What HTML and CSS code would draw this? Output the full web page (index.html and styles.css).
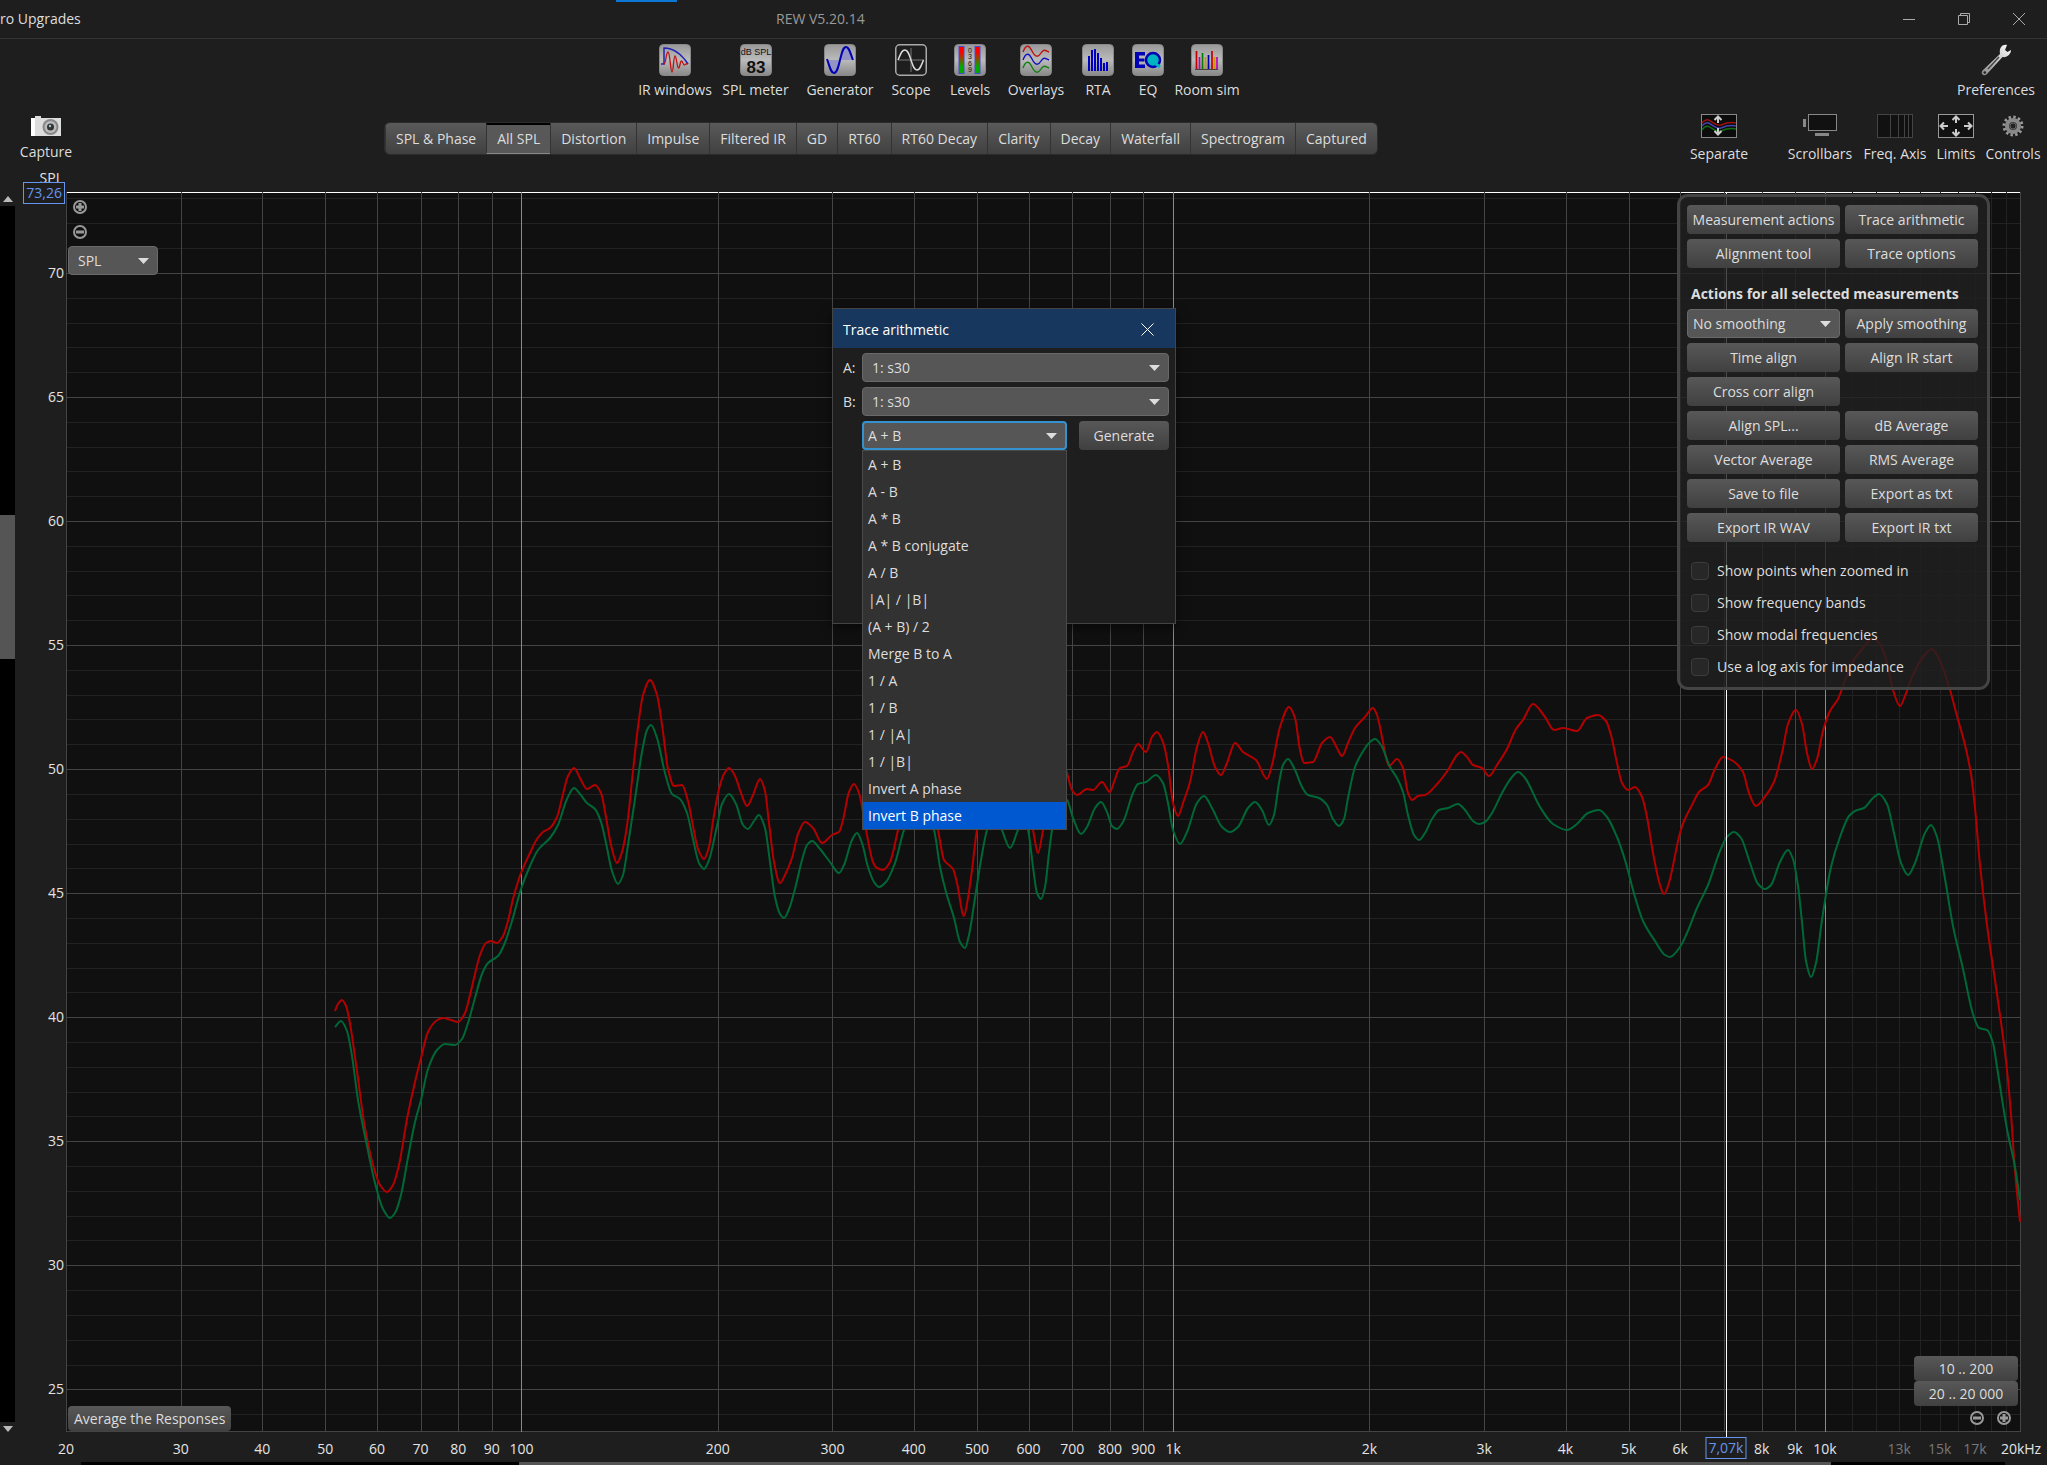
FILE: index.html
```html
<!DOCTYPE html>
<html lang="en">
<head>
    <meta charset="UTF-8">
    <meta name="viewport" content="width=device-width, initial-scale=1.0">
    <title>REW V5.20.14</title>
    <link rel="stylesheet" href="styles.css">
</head>
<body>
<header class="titlebar">
    <span class="menu-item">ro Upgrades</span>
    <span class="drag-mark"></span>
    <h1>REW V5.20.14</h1>
    <div class="window-buttons">
        <button aria-label="Minimize"><svg width="12" height="12" viewBox="0 0 12 12"><path d="M0 6.500H12"/></svg></button>
        <button aria-label="Restore"><svg width="12" height="12" viewBox="0 0 12 12"><path d="M.5 2.500H9.500V11.500H.5ZM2.500 2.500V.5H11.500V9.500H9.500"/></svg></button>
        <button aria-label="Close"><svg width="12" height="12" viewBox="0 0 12 12"><path d="M0 0L12 12M12 0L0 12"/></svg></button>
    </div>
</header>

<nav class="toolbar">
    <div class="tools">
        <button class="tool">
            <svg width="32" height="32" viewBox="0 0 32 32"><use href="#tile"/><path d="M2 20H5V4C15 4 23 11 29 20" fill="none" stroke="#2222b8" stroke-width="1.500"/><path d="M5 20C7 20 7 8 9 8S11.500 28 13 28 14.500 12 16 12 18 24 19.500 24 21 17 22.500 17 24 21.500 25.500 21 27 19 29 20" fill="none" stroke="#c01010" stroke-width="1.300"/></svg>
            <span>IR windows</span>
        </button>
        <button class="tool">
            <svg width="32" height="32" viewBox="0 0 32 32"><use href="#tile"/><text x="16" y="11" class="tile-small">dB SPL</text><text x="16" y="29" class="tile-big">83</text></svg>
            <span>SPL meter</span>
        </button>
        <button class="tool">
            <svg width="32" height="32" viewBox="0 0 32 32"><use href="#tile"/><path d="M3 16C6 24 7 29 10 29S14 24 16 16ZM16 16C18 8 19 3 22 3S26 8 29 16Z" fill="#9494c4"/><path d="M3 15C6 24 7 29 10 29S14 24 16 16 19 3 22 3 26 8 29 16" fill="none" stroke="#0000b4" stroke-width="2"/></svg>
            <span>Generator</span>
        </button>
        <button class="tool">
            <svg width="32" height="32" viewBox="0 0 32 32"><rect x=".75" y=".75" width="30.500" height="30.500" rx="4" fill="#1e1e1e" stroke="#aaa" stroke-width="1.500"/><path d="M3 16H29M16 4V28" stroke="#777"/><path d="M3 16C6 9 7 6 10 6S14 10 16 16 19 26 22 26 26 22 28.500 16" fill="none" stroke="#ddd" stroke-width="1.500"/></svg>
            <span>Scope</span>
        </button>
        <button class="tool">
            <svg width="32" height="32" viewBox="0 0 32 32"><use href="#tile"/><rect x="5" y="2.500" width="5" height="27" fill="url(#level)" stroke="#4a4ad0"/><rect x="21" y="2.500" width="5" height="27" fill="url(#level)" stroke="#4a4ad0"/><text x="16" y="9" class="tile-tick">0</text><text x="16" y="15" class="tile-tick">3</text><text x="16" y="22" class="tile-tick">6</text><text x="16" y="28" class="tile-tick">9</text></svg>
            <span>Levels</span>
        </button>
        <button class="tool">
            <svg width="32" height="32" viewBox="0 0 32 32"><use href="#tile"/><g fill="none" stroke-width="1.400"><path d="M3 8C6 0 9 1 12 7S18 14 21 9 26 7 29 8" stroke="#c01010"/><path d="M3 16C6 8 9 9 12 15S18 22 21 17 26 15 29 16" stroke="#1010c0"/><path d="M3 24C6 16 9 17 12 23S18 30 21 25 26 23 29 24" stroke="#108010"/></g></svg>
            <span>Overlays</span>
        </button>
        <button class="tool">
            <svg width="32" height="32" viewBox="0 0 32 32"><use href="#tile"/><path d="M7 27V12M10 27V6M13 27V5M16 27V9M19 27V14M22 27V19M25 27V18" stroke="#0000c0" stroke-width="2"/></svg>
            <span>RTA</span>
        </button>
        <button class="tool">
            <svg width="32" height="32" viewBox="0 0 32 32"><use href="#tile"/><path d="M3 8H13V11.500H7V14.500H12.500V17.500H7V20.500H13V24H3Z" fill="#0000b4"/><circle cx="21" cy="16" r="7" fill="#00b4c0" stroke="#0000b4" stroke-width="2.500"/><path d="M24 20L28 23" stroke="#00b4c0" stroke-width="3"/></svg>
            <span>EQ</span>
        </button>
        <button class="tool">
            <svg width="32" height="32" viewBox="0 0 32 32"><use href="#tile"/><g stroke-width="1.700"><path d="M5.500 25V7M21 25V7" stroke="#c00000"/><path d="M8.500 25V13M26 25V13" stroke="#c000c0"/><path d="M11.500 25V9" stroke="#008000"/><path d="M14.500 25V13M23.500 25V13" stroke="#c89600"/><path d="M17.500 25V11" stroke="#0000b0"/></g><path d="M4 25.500H27" stroke="#444"/></svg>
            <span>Room sim</span>
        </button>
    </div>
    <button class="tool preferences">
        <svg width="32" height="32" viewBox="0 0 32 32"><path d="M27 1C22 0 19 4 20 10L2.500 26.500C0 30 4 33 7 30L22.500 13C27 14 31 10 31 6L27.500 8 25 6Z" fill="url(#steel)"/><path d="M8 25L19 13" stroke="#444" stroke-width="1.500"/><circle cx="4.800" cy="28.500" r="1.300" fill="#222"/></svg>
        <span>Preferences</span>
    </button>
</nav>

<div class="graph-bar">
    <button class="tool capture">
        <svg width="32" height="24" viewBox="0 0 32 24"><path d="M1 4H5V2H11V4H31V22H1Z" fill="#ddd"/><path d="M1 4H5V22H1Z" fill="#fff"/><circle cx="20.500" cy="13" r="8" fill="#888"/><circle cx="20.500" cy="13" r="6" fill="#bbb"/><circle cx="20.500" cy="13" r="3.500" fill="#333"/><circle cx="20" cy="12" r="1.200" fill="#9cc"/></svg>
        <span>Capture</span>
    </button>
    <div class="tabs">
        <button>SPL &amp; Phase</button>
        <button class="active">All SPL</button>
        <button>Distortion</button>
        <button>Impulse</button>
        <button>Filtered IR</button>
        <button>GD</button>
        <button>RT60</button>
        <button>RT60 Decay</button>
        <button>Clarity</button>
        <button>Decay</button>
        <button>Waterfall</button>
        <button>Spectrogram</button>
        <button>Captured</button>
    </div>
    <div class="view-tools">
        <button class="tool">
            <svg width="36" height="24" viewBox="0 0 36 24"><rect x=".5" y=".5" width="35" height="23" fill="#0c0c0c" stroke="#888"/><g fill="none" stroke-width="1.500"><path d="M1 9C8 0 12 13 20 11 27 8 30 8 35 9" stroke="#a01010"/><path d="M1 12C8 3 12 16 20 14 27 11 30 11 35 12" stroke="#4444b0"/><path d="M1 16C8 6 12 20 20 17 27 14 30 14 35 15" stroke="#107010"/></g><path d="M17 2V9M13.500 6L17 2.500L20.500 6M17 14V21M13.500 17L17 20.500L20.500 17" fill="none" stroke="#ccc" stroke-width="2"/></svg>
            <span>Separate</span>
        </button>
        <button class="tool">
            <svg width="36" height="24" viewBox="0 0 36 24"><rect x="6.500" y=".5" width="28" height="16" fill="#111" stroke="#888"/><path d="M1 5H4V13H1ZM13 19H27V22H13Z" fill="#888"/></svg>
            <span>Scrollbars</span>
        </button>
        <button class="tool">
            <svg width="36" height="24" viewBox="0 0 36 24"><rect x=".5" y=".5" width="35" height="23" fill="#111" stroke="#444"/><path d="M13.500 0V24M21.500 0V24M27.500 0V24M31.500 0V24" stroke="#444"/></svg>
            <span>Freq. Axis</span>
        </button>
        <button class="tool">
            <svg width="36" height="24" viewBox="0 0 36 24"><rect x=".5" y=".5" width="35" height="23" fill="#111" stroke="#999"/><path d="M18 2V9M14.500 6L18 2.500L21.500 6M18 15V22M14.500 18L18 21.500L21.500 18M3 12H10M6 8.500L2.500 12L6 15.500M26 12H33M30 8.500L33.500 12L30 15.500" fill="none" stroke="#ccc" stroke-width="2"/></svg>
            <span>Limits</span>
        </button>
        <button class="tool">
            <svg width="24" height="24" viewBox="0 0 24 24"><circle cx="12" cy="12" r="9" fill="none" stroke="#999" stroke-width="3" stroke-dasharray="2.400 2.312"/><circle cx="12" cy="12" r="6" fill="#333" stroke="#888" stroke-width="4"/><circle cx="12" cy="12" r="3" fill="#222" stroke="#666"/></svg>
            <span>Controls</span>
        </button>
    </div>
</div>

<main class="graph">
    <div class="v-scroll">
        <span class="arrow up"></span>
        <div class="track"><div class="thumb"></div></div>
        <span class="arrow down"></span>
    </div>
    <div class="y-axis" id="y-axis">
        <span class="axis-name">SPL</span>
        <span class="cursor-value">73,26</span>
    </div>

    <section class="plot">
        <svg class="chart" viewBox="0 0 1955 1240" preserveAspectRatio="none">
            <g id="grid" shape-rendering="crispEdges"></g>
            <g transform="translate(-66 -192)">
                <path id="trace-red" class="trace red"/>
                <path id="trace-green" class="trace green"/>
            </g>
        </svg>
        <div class="cursor-line" id="cursor-line"></div>

        <div class="plot-left">
            <button class="zoom" aria-label="Zoom in"><svg width="16" height="16"><use href="#plus"/></svg></button>
            <button class="zoom" aria-label="Zoom out"><svg width="16" height="16"><use href="#minus"/></svg></button>
            <select aria-label="Graph axis">
                <option>SPL</option>
            </select>
            <button class="btn average">Average the Responses</button>
        </div>

        <div class="plot-right">
            <button class="btn">10 .. 200</button>
            <button class="btn">20 .. 20 000</button>
            <div class="zoom-row">
                <button class="zoom" aria-label="Zoom out"><svg width="16" height="16"><use href="#minus"/></svg></button>
                <button class="zoom" aria-label="Zoom in"><svg width="16" height="16"><use href="#plus"/></svg></button>
            </div>
        </div>

        <aside class="controls">
            <div class="button-grid">
                <button class="btn">Measurement actions</button>
                <button class="btn">Trace arithmetic</button>
                <button class="btn">Alignment tool</button>
                <button class="btn">Trace options</button>
            </div>
            <h2>Actions for all selected measurements</h2>
            <div class="button-grid">
                <select aria-label="Smoothing">
                    <option>No smoothing</option>
                </select>
                <button class="btn">Apply smoothing</button>
                <button class="btn">Time align</button>
                <button class="btn">Align IR start</button>
                <button class="btn">Cross corr align</button>
                <span></span>
                <button class="btn">Align SPL...</button>
                <button class="btn">dB Average</button>
                <button class="btn">Vector Average</button>
                <button class="btn">RMS Average</button>
                <button class="btn">Save to file</button>
                <button class="btn">Export as txt</button>
                <button class="btn">Export IR WAV</button>
                <button class="btn">Export IR txt</button>
            </div>
            <div class="checks">
                <label><input type="checkbox"> Show points when zoomed in</label>
                <label><input type="checkbox"> Show frequency bands</label>
                <label><input type="checkbox"> Show modal frequencies</label>
                <label><input type="checkbox"> Use a log axis for impedance</label>
            </div>
        </aside>

        <div class="dialog" role="dialog" aria-labelledby="dialog-title">
            <div class="dialog-title">
                <h2 id="dialog-title">Trace arithmetic</h2>
                <button aria-label="Close dialog"><svg width="13" height="13" viewBox="0 0 13 13"><path d="M.5 .5L12.500 12.500M12.500 .5L.5 12.500"/></svg></button>
            </div>
            <div class="dialog-body">
                <label for="trace-a">A:</label>
                <select id="trace-a" class="wide">
                    <option>1: s30</option>
                </select>
                <label for="trace-b">B:</label>
                <select id="trace-b" class="wide">
                    <option>1: s30</option>
                </select>
                <div class="operation">
                    <select id="operation" class="focused" aria-label="Operation">
                        <option>A + B</option>
                    </select>
                    <ul class="popup" role="listbox" aria-label="Operations">
                        <li role="option">A + B</li>
                        <li role="option">A - B</li>
                        <li role="option">A * B</li>
                        <li role="option">A * B conjugate</li>
                        <li role="option">A / B</li>
                        <li role="option">|A| / |B|</li>
                        <li role="option">(A + B) / 2</li>
                        <li role="option">Merge B to A</li>
                        <li role="option">1 / A</li>
                        <li role="option">1 / B</li>
                        <li role="option">1 / |A|</li>
                        <li role="option">1 / |B|</li>
                        <li role="option">Invert A phase</li>
                        <li role="option" class="selected" aria-selected="true">Invert B phase</li>
                    </ul>
                </div>
                <button class="btn">Generate</button>
            </div>
        </div>
    </section>

    <div class="x-axis" id="x-axis"></div>
    <div class="h-scroll">
        <div class="h-thumb"></div>
    </div>
</main>

<!-- shared icon parts -->
<svg class="defs" width="0" height="0" aria-hidden="true">
    <defs>
        <linearGradient id="tile-fill" x1="0" y1="0" x2="0" y2="1"><stop offset="0" stop-color="#999"/><stop offset=".5" stop-color="#bbb"/><stop offset="1" stop-color="#888"/></linearGradient>
        <linearGradient id="level" x1="0" y1="0" x2="0" y2="1"><stop offset=".2" stop-color="#f00"/><stop offset=".75" stop-color="#0a0"/></linearGradient>
        <linearGradient id="steel" x1="1" y1="0" x2="0" y2="1"><stop offset="0" stop-color="#fff"/><stop offset="1" stop-color="#888"/></linearGradient>
        <rect id="tile" x=".5" y=".5" width="31" height="31" rx="4" fill="url(#tile-fill)" stroke="#888"/>
        <g id="minus"><circle cx="8" cy="8" r="6" fill="none" stroke="#999" stroke-width="2"/><path d="M4 8H12" stroke="#999" stroke-width="3"/></g>
        <g id="plus"><use href="#minus"/><path d="M8 4V12" stroke="#999" stroke-width="3"/></g>
    </defs>
</svg>

<script src="script.js"></script>
</body>
</html>
```
FILE: styles.css
```css
* {
    box-sizing: border-box;
}

body {
    margin: 0;
    min-height: 100vh;
    display: flex;
    flex-direction: column;
    background: #1e1e1e;
    color: #ddd;
    font-family: "Open Sans", "Noto Sans", sans-serif;
    font-size: 14px;
    line-height: 20px;
    overflow: hidden;
}

button, select, input {
    font: inherit;
    color: inherit;
    margin: 0;
}

button {
    padding: 0;
    border: none;
    background: none;
    white-space: nowrap;
}

h1, h2 {
    margin: 0;
    font-size: 14px;
}

/* title bar */
.titlebar {
    height: 39px;
    display: grid;
    grid-template-columns: 616px 61px 1fr auto;
    align-items: center;
    border-bottom: 1px solid #333;
}

.drag-mark {
    height: 2px;
    align-self: start;
    background: #0a78d4;
}

.titlebar h1 {
    padding-left: 99px;
    font-weight: normal;
    color: #999;
}

.window-buttons {
    display: flex;
    gap: 43px;
    padding-right: 22px;
}

.window-buttons svg, .dialog-title svg {
    display: block;
    fill: none;
    stroke: #aaa;
}

/* icon toolbars */
.toolbar {
    height: 66px;
    display: flex;
    justify-content: space-between;
    align-items: flex-start;
    padding: 5px 12px 0 633px;
}

.tools {
    display: grid;
    grid-template-columns: 84px 77px 92px 50px 68px 64px 60px 40px 78px;
}

.tool {
    display: flex;
    flex-direction: column;
    align-items: center;
    gap: 4px;
}

.tile-small, .tile-big, .tile-tick {
    font-family: "Liberation Sans", sans-serif;
    text-anchor: middle;
    fill: #111;
}

.tile-small {
    font-size: 9px;
}

.tile-big {
    font-size: 17px;
    font-weight: bold;
}

.tile-tick {
    font-size: 7px;
}

.graph-bar {
    height: 87px;
    display: grid;
    grid-template-columns: 384px 994px 1fr;
    align-items: start;
    padding-top: 9px;
}

.capture {
    width: 92px;
}

.tabs {
    display: flex;
    height: 33px;
    margin-top: 8px;
    border: 1px solid #2c2c2c;
    border-radius: 6px;
    overflow: hidden;
    background: linear-gradient(#5a5a5a, #404040);
}

.tabs button {
    flex: 1 1 auto;
    border-left: 1px solid #333;
}

.tabs button.active {
    background: #585858;
    border-top: 2px solid #000;
    border-bottom: 1px solid #888;
}

.view-tools {
    display: grid;
    grid-template-columns: 124px 78px 72px 50px 64px;
    justify-content: end;
    padding-right: 2px;
}

.view-tools .tool {
    gap: 6px;
}

/* graph area: scrollbar, y axis, plot, right margin */
.graph {
    flex: 1;
    display: grid;
    grid-template-columns: 15px 51px 1fr 26px;
    grid-template-rows: 1fr 30px 3px;
}

.v-scroll {
    display: flex;
    flex-direction: column;
    align-items: center;
    gap: 4px;
    padding-top: 4px;
}

.track {
    flex: 1;
    width: 100%;
    background: #000;
    display: grid;
    grid-template-rows: 308fr 143fr 760fr;
}

.thumb {
    grid-row: 2;
    background: #555;
}

.arrow {
    border: 5px solid transparent;
}

.arrow.up {
    border-top: none;
    border-bottom: 6px solid #bbb;
}

.arrow.down {
    border-bottom: none;
    border-top: 6px solid #bbb;
}

.y-axis, .x-axis {
    position: relative;
    color: #e4e4e4;
}

.y-axis .tick {
    position: absolute;
    right: 2px;
    transform: translateY(-50%);
}

.x-axis .tick {
    position: absolute;
    top: 7px;
    transform: translateX(-50%);
}

.x-axis .dim {
    color: #777;
}

.axis-name {
    position: absolute;
    right: 3px;
    top: -24px;
}

.cursor-value {
    position: absolute;
    right: 1px;
    top: -10px;
    padding: 0 2px;
    border: 1px solid #6495ed;
    background: #1e1e1e;
    color: #6495ed;
}

.x-axis .cursor-value {
    right: auto;
    top: 5px;
    transform: translateX(-50%);
}

.x-axis {
    grid-column: 3;
    grid-row: 2;
}

.h-scroll {
    grid-column: 1 / -1;
    grid-row: 3;
    display: grid;
    grid-template-columns: 438fr 1312fr 174fr;
    margin: 0 42px 0 81px;
    background: #000;
}

.h-thumb {
    grid-column: 2;
    background: #555;
}

.plot {
    position: relative;
    background: #101010;
    border-top: 1px solid #fff;
}

.chart {
    position: absolute;
    top: -1px;
    left: 0;
    width: 100%;
    height: calc(100% + 1px);
}

.chart line {
    vector-effect: non-scaling-stroke;
}

.line-minor {
    stroke: #222;
}

.line-major {
    stroke: #444;
}

.line-decade {
    stroke: #8a8a8a;
}

.trace {
    fill: none;
    stroke-width: 2;
    vector-effect: non-scaling-stroke;
}

.trace.red {
    stroke: #b40000;
}

.trace.green {
    stroke: #006837;
}

.cursor-line {
    position: absolute;
    top: 0;
    bottom: -5px;
    width: 1px;
    background: #fff;
}

/* widgets */
.btn {
    height: 29px;
    border-radius: 4px;
    background: linear-gradient(#585858, #404040);
}

select {
    appearance: none;
    height: 29px;
    padding: 0 24px 0 5px;
    border: 1px solid #696969;
    border-radius: 4px;
    background: #565656 url("data:image/svg+xml,%3Csvg xmlns='http://www.w3.org/2000/svg' width='11' height='6'%3E%3Cpath d='M0 0H11L5.500 6Z' fill='%23ddd'/%3E%3C/svg%3E") no-repeat right 8px center;
}

select.wide {
    padding-left: 9px;
}

select.focused {
    border: 2px solid #3592d0;
    padding-left: 4px;
}

.zoom {
    height: 16px;
}

.zoom svg {
    display: block;
}

.plot-left {
    position: absolute;
    top: 6px;
    bottom: 1px;
    left: 2px;
    display: flex;
    flex-direction: column;
    align-items: flex-start;
}

.plot-left .zoom {
    margin: 0 0 9px 4px;
}

.plot-left select {
    width: 90px;
    padding-left: 9px;
    margin-top: -3px;
}

.average {
    height: 25px;
    margin-top: auto;
    padding: 0 6px;
}

.plot-right {
    position: absolute;
    right: 3px;
    bottom: 6px;
    width: 104px;
    display: flex;
    flex-direction: column;
}

.plot-right .btn {
    height: 25px;
}

.zoom-row {
    display: flex;
    justify-content: flex-end;
    gap: 11px;
    padding: 4px 6px 0 0;
}

/* floating control panel */
.controls {
    position: absolute;
    top: 1px;
    right: 31px;
    padding: 8px 9px 10px 7px;
    border: 3px solid #444;
    border-radius: 11px;
    background: rgba(32, 32, 32, 0.8);
}

.button-grid {
    display: grid;
    grid-template-columns: 153px 133px;
    gap: 5px;
}

.controls h2 {
    margin: 16px 0 5px 4px;
    font-weight: bold;
    line-height: 20px;
}

.checks {
    display: flex;
    flex-direction: column;
    gap: 12px;
    padding: 19px 0 0 4px;
}

.checks label {
    display: flex;
    align-items: center;
    gap: 8px;
}

.checks input {
    appearance: none;
    width: 18px;
    height: 18px;
    border: 1px solid #3c3c3c;
    border-radius: 4px;
    background: #272727;
}

/* trace arithmetic window */
.dialog {
    position: absolute;
    top: 115px;
    left: 766px;
    width: 344px;
    height: 316px;
    border: 1px solid #444;
    background: #1e1e1e;
    box-shadow: 0 4px 10px rgba(0, 0, 0, 0.5);
}

.dialog-title {
    display: flex;
    justify-content: space-between;
    align-items: center;
    height: 39px;
    padding: 2px 21px 0 10px;
    background: #17375e;
    color: #fff;
}

.dialog-title h2 {
    font-weight: normal;
}

.dialog-title svg {
    stroke: #fff;
}

.dialog-body {
    display: grid;
    grid-template-columns: 19px 205px 1fr;
    row-gap: 5px;
    align-items: center;
    padding: 5px 6px 0 10px;
}

.dialog-body .wide {
    grid-column: 2 / 4;
}

.dialog-body .btn {
    margin-left: 12px;
}

.operation {
    grid-column: 2;
    position: relative;
}

.operation select {
    display: block;
    width: 100%;
}

.popup {
    position: absolute;
    z-index: 1;
    top: 100%;
    left: 0;
    right: 0;
    margin: 0;
    padding: 0;
    list-style: none;
    border: 1px solid #4a4a4a;
    background: #323232;
}

.popup li {
    padding: 0 5px;
    line-height: 27px;
}

.popup .selected {
    background: #0058d0;
    color: #fff;
}
```
FILE: script.js
```js
const SVG_NS = 'http://www.w3.org/2000/svg';
const WIDTH = 1955;
const HEIGHT = 1240;
const F_MIN = 20;
const F_MAX = 20000;
const DB_MAX = 73.26;
const DB_MIN = 23.28;
const CURSOR_HZ = 7050;

// sampled trace points: x, y pairs
const red = [335,1011, 338,1004, 342,1000, 346,1006, 349,1018, 357,1071, 364,1122, 373,1165, 380,1185, 387,1192, 393,1185, 399,1165, 407,1119, 415,1082, 421,1058, 428,1032, 436,1021, 443,1018, 451,1020, 458,1022, 465,1013, 470,995, 475,974, 480,955, 486,943, 491,941, 497,943, 503,936, 508,921, 513,899, 521,873, 530,853, 537,839, 543,832, 550,828, 557,817, 563,794, 568,776, 574,768, 580,778, 587,789, 595,785, 601,793, 606,817, 611,845, 617,863, 622,852, 627,826, 633,771, 638,727, 643,695, 650,680, 657,695, 663,732, 668,769, 674,786, 682,785, 688,801, 693,826, 698,849, 704,859, 709,847, 713,821, 719,789, 724,774, 729,768, 735,776, 741,793, 747,806, 753,795, 760,779, 765,791, 769,823, 774,862, 780,883, 785,875, 792,858, 798,834, 805,822, 813,828, 822,843, 832,835, 839,832, 843,820, 849,792, 854,784, 859,793, 866,830, 873,862, 877,868, 883,870, 890,862, 898,830, 905,800, 915,780, 928,790, 938,830, 944,860, 953,869, 957,883, 964,916, 968,898, 972,870, 977,830, 990,785, 1010,780, 1025,800, 1033,830, 1038,853, 1043,830, 1052,770, 1060,755, 1067,773, 1072,790, 1077,795, 1087,789, 1093,790, 1102,782, 1110,792, 1114,782, 1120,768, 1127,766, 1133,752, 1138,744, 1146,752, 1152,737, 1157,732, 1163,742, 1168,765, 1173,803, 1178,816, 1183,803, 1190,782, 1197,747, 1203,732, 1208,743, 1215,767, 1221,775, 1227,763, 1235,743, 1243,752, 1256,760, 1267,779, 1272,765, 1280,727, 1289,707, 1295,718, 1300,750, 1304,763, 1313,762, 1322,743, 1330,737, 1337,748, 1342,756, 1348,743, 1355,728, 1365,717, 1373,708, 1377,715, 1382,737, 1386,757, 1389,766, 1397,759, 1403,768, 1408,793, 1412,800, 1418,796, 1425,795, 1438,783, 1448,770, 1457,755, 1461,752, 1467,757, 1473,765, 1482,768, 1489,776, 1497,765, 1507,749, 1516,729, 1523,720, 1533,704, 1545,717, 1554,730, 1563,728, 1577,731, 1587,718, 1598,715, 1606,721, 1611,735, 1617,763, 1622,783, 1628,790, 1635,787, 1642,797, 1647,817, 1653,853, 1660,885, 1664,894, 1668,886, 1680,833, 1684,821, 1692,805, 1699,792, 1708,785, 1715,769, 1723,757, 1733,761, 1743,772, 1749,793, 1756,806, 1764,798, 1774,782, 1782,753, 1788,724, 1796,710, 1802,724, 1807,753, 1812,769, 1817,759, 1823,731, 1830,711, 1838,699, 1843,686, 1852,663, 1863,648, 1873,638, 1880,644, 1887,663, 1893,690, 1900,706, 1905,696, 1912,677, 1923,657, 1932,649, 1940,661, 1950,690, 1957,716, 1965,745, 1971,774, 1975,808, 1980,865, 1987,925, 1997,994, 2006,1061, 2011,1114, 2015,1171, 2020,1222];
const green = [335,1027, 341,1021, 347,1031, 352,1056, 358,1100, 366,1141, 375,1183, 383,1209, 390,1218, 395,1213, 401,1195, 407,1163, 415,1122, 421,1100, 428,1069, 437,1050, 445,1044, 455,1045, 462,1039, 468,1023, 475,998, 482,974, 488,963, 498,956, 504,945, 512,921, 521,889, 530,866, 538,850, 550,838, 558,825, 567,799, 574,788, 580,794, 587,803, 595,809, 601,822, 606,843, 612,871, 618,884, 623,875, 628,845, 635,799, 642,752, 647,730, 651,725, 657,738, 665,773, 672,794, 680,799, 687,813, 693,839, 699,863, 704,869, 709,860, 717,826, 722,804, 729,794, 736,804, 743,825, 748,829, 754,821, 759,815, 765,828, 770,862, 775,897, 780,914, 784,918, 789,909, 795,889, 802,860, 807,845, 812,841, 820,849, 830,862, 839,873, 844,865, 852,840, 857,833, 862,843, 868,867, 874,882, 879,887, 886,882, 895,863, 904,830, 918,800, 934,830, 940,867, 946,892, 954,918, 960,942, 965,948, 969,935, 975,898, 981,860, 987,830, 995,812, 1002,830, 1010,848, 1018,830, 1023,820, 1028,830, 1033,867, 1037,893, 1041,899, 1045,887, 1049,853, 1052,830, 1059,796, 1067,800, 1073,818, 1081,834, 1087,827, 1095,808, 1101,802, 1107,812, 1112,826, 1117,829, 1123,822, 1133,793, 1138,784, 1146,782, 1156,775, 1163,783, 1168,803, 1173,830, 1180,844, 1187,832, 1197,803, 1204,796, 1212,808, 1222,827, 1230,832, 1238,827, 1248,808, 1255,802, 1262,810, 1269,825, 1274,815, 1279,783, 1283,765, 1288,759, 1295,770, 1302,787, 1308,795, 1319,798, 1327,805, 1333,819, 1339,826, 1344,819, 1348,798, 1355,767, 1362,753, 1369,743, 1375,739, 1381,745, 1390,767, 1397,778, 1403,792, 1408,815, 1414,835, 1419,840, 1425,833, 1432,819, 1439,810, 1448,808, 1458,804, 1465,810, 1473,821, 1479,824, 1485,822, 1492,813, 1502,793, 1512,777, 1518,772, 1525,778, 1540,807, 1553,824, 1567,830, 1577,824, 1588,813, 1599,810, 1607,817, 1617,837, 1625,860, 1635,897, 1643,921, 1655,941, 1665,955, 1670,957, 1680,947, 1687,933, 1697,908, 1708,885, 1720,851, 1727,837, 1734,832, 1741,838, 1750,863, 1758,884, 1765,889, 1771,885, 1780,862, 1788,850, 1793,859, 1798,886, 1802,922, 1806,961, 1811,977, 1816,963, 1822,920, 1831,867, 1840,837, 1849,816, 1855,811, 1864,808, 1873,798, 1879,794, 1887,804, 1894,833, 1901,863, 1908,875, 1915,863, 1925,833, 1931,825, 1937,837, 1944,873, 1953,926, 1963,969, 1973,1014, 1979,1028, 1987,1030, 1993,1043, 1997,1067, 2007,1129, 2015,1167, 2020,1200];

function xPos(hz) {
    return Math.log10(hz / F_MIN) / Math.log10(F_MAX / F_MIN);
}

function yPos(db) {
    return (DB_MAX - db) / (DB_MAX - DB_MIN);
}

function addLine(x1, y1, x2, y2, className) {
    const line = document.createElementNS(SVG_NS, 'line');
    line.setAttribute('x1', x1);
    line.setAttribute('y1', y1);
    line.setAttribute('x2', x2);
    line.setAttribute('y2', y2);
    line.setAttribute('class', className);
    document.getElementById('grid').appendChild(line);
}

function vertical(hz, className) {
    const x = Math.min(Math.round(xPos(hz) * WIDTH), WIDTH - 1) + 0.5;
    addLine(x, 0, x, HEIGHT, className);
}

function horizontal(db, className) {
    const y = Math.round(yPos(db) * HEIGHT) + 0.5;
    addLine(0, y, WIDTH, y, className);
}

function addTick(axisId, text, side, fraction, className) {
    const tick = document.createElement('span');
    tick.className = className;
    tick.textContent = text;
    tick.style[side] = fraction * 100 + '%';
    document.getElementById(axisId).appendChild(tick);
}

function drawGrid() {
    for (let db = 24; db <= 73; db++) {
        if (db % 5 !== 0) horizontal(db, 'line-minor');
    }
    for (let k = 11; k < 20; k++) {
        vertical(k * 1000, 'line-minor');
    }
    for (let db = 25; db <= 70; db += 5) {
        horizontal(db, 'line-major');
        addTick('y-axis', db, 'top', yPos(db), 'tick');
    }
    vertical(20, 'line-major');
    [10, 100, 1000].forEach(decade => {
        for (let n = 2; n < 10; n++) {
            vertical(n * decade, 'line-major');
        }
    });
    vertical(20000, 'line-major');
    addLine(0, HEIGHT - 0.5, WIDTH, HEIGHT - 0.5, 'line-major');
    [100, 1000, 10000].forEach(hz => vertical(hz, 'line-decade'));
}

function drawFrequencies() {
    [20, 30, 40, 50, 60, 70, 80, 90, 100, 200, 300, 400, 500, 600, 700, 800, 900].forEach(hz => {
        addTick('x-axis', hz, 'left', xPos(hz), 'tick');
    });
    [1, 2, 3, 4, 5, 6, 8, 9, 10].forEach(k => {
        addTick('x-axis', k + 'k', 'left', xPos(k * 1000), 'tick');
    });
    [13, 15, 17].forEach(k => {
        addTick('x-axis', k + 'k', 'left', xPos(k * 1000), 'tick dim');
    });
    addTick('x-axis', '20kHz', 'left', xPos(20000), 'tick');
    addTick('x-axis', '7,07k', 'left', xPos(CURSOR_HZ), 'cursor-value');
    document.getElementById('cursor-line').style.left = xPos(CURSOR_HZ) * 100 + '%';
}

// monotone cubic through the points, so peaks stay where they were sampled
function smoothPath(values) {
    const pts = [];
    for (let i = 0; i < values.length; i += 2) {
        pts.push([values[i], values[i + 1]]);
    }
    const slope = i => (pts[i + 1][1] - pts[i][1]) / (pts[i + 1][0] - pts[i][0]);
    const tangents = pts.map((p, i) => {
        if (i === 0) return slope(0);
        if (i === pts.length - 1) return slope(i - 1);
        const a = slope(i - 1);
        const b = slope(i);
        return a * b <= 0 ? 0 : (2 * a * b) / (a + b);
    });
    let d = `M${pts[0][0]} ${pts[0][1]}`;
    for (let i = 1; i < pts.length; i++) {
        const [x0, y0] = pts[i - 1];
        const [x1, y1] = pts[i];
        const h = (x1 - x0) / 3;
        d += `C${x0 + h} ${y0 + h * tangents[i - 1]} ${x1 - h} ${y1 - h * tangents[i]} ${x1} ${y1}`;
    }
    return d;
}

drawGrid();
drawFrequencies();
document.getElementById('trace-red').setAttribute('d', smoothPath(red));
document.getElementById('trace-green').setAttribute('d', smoothPath(green));
```
